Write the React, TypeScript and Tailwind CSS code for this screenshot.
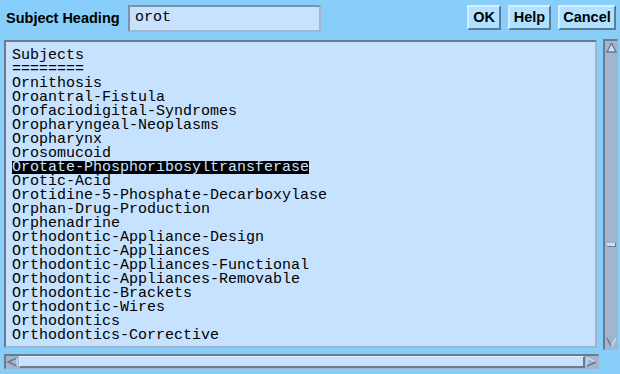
import React from 'react';

const subjects = [
  'Subjects',
  '========',
  'Ornithosis',
  'Oroantral-Fistula',
  'Orofaciodigital-Syndromes',
  'Oropharyngeal-Neoplasms',
  'Oropharynx',
  'Orosomucoid',
  'Orotate-Phosphoribosyltransferase',
  'Orotic-Acid',
  'Orotidine-5-Phosphate-Decarboxylase',
  'Orphan-Drug-Production',
  'Orphenadrine',
  'Orthodontic-Appliance-Design',
  'Orthodontic-Appliances',
  'Orthodontic-Appliances-Functional',
  'Orthodontic-Appliances-Removable',
  'Orthodontic-Brackets',
  'Orthodontic-Wires',
  'Orthodontics',
  'Orthodontics-Corrective',
];

const selected = 'Orotate-Phosphoribosyltransferase';

const mono = "font-['Liberation_Mono',monospace]";
const sans = "font-['Liberation_Sans',Arial,sans-serif]";

// raised Tk-style button
const TkButton: React.FC<{ label: string; width: string }> = ({ label, width }) => (
  <div
    className={`${width} h-[25px] flex items-center justify-center bg-[#b0e2ff] border-2 border-t-[#d4efff] border-l-[#d4efff] border-b-[#5b7c98] border-r-[#5b7c98] ${sans} font-bold text-[14.5px] text-black`}
  >
    {label}
  </div>
);

const ArrowUp = () => (
  <svg width="11" height="11" viewBox="0 0 11 11">
    <polygon points="5.5,1 10,10 1,10" fill="#c6e2ff" />
    <polyline points="5.5,1 10,10 1,10 5.5,1" stroke="#6c7b8b" strokeWidth="1.5" fill="none" />
  </svg>
);

const ArrowDown = () => (
  <svg width="11" height="11" viewBox="0 0 11 11">
    <polygon points="1,1 10,1 5.5,10" fill="#a2b5cd" />
    <polyline points="1,1 5.5,10" stroke="#6c7b8b" strokeWidth="1.5" fill="none" />
    <polyline points="5.5,10 10,1" stroke="#c6e2ff" strokeWidth="1.2" fill="none" />
  </svg>
);

const ArrowLeft = () => (
  <svg width="11" height="10" viewBox="0 0 11 10">
    <polygon points="1,5 10,1 10,9" fill="#a2b5cd" />
    <polyline points="10,1 1,5 10,9" stroke="#6c7b8b" strokeWidth="1.5" fill="none" />
    <polyline points="10,1 10,9" stroke="#c6e2ff" strokeWidth="1.2" fill="none" />
  </svg>
);

const ArrowRight = () => (
  <svg width="11" height="10" viewBox="0 0 11 10">
    <polygon points="1,1 10,5 1,9" fill="#a2b5cd" />
    <polyline points="1,9 1,1 10,5" stroke="#c6e2ff" strokeWidth="1.2" fill="none" />
    <polyline points="10,5 1,9" stroke="#6c7b8b" strokeWidth="1.5" fill="none" />
  </svg>
);

export default function App() {
  return (
    <div className="w-[620px] h-[374px] bg-[#87cefa] flex flex-col overflow-hidden">
      {/* Header row */}
      <div className="h-[39px] flex items-start pt-[5px]">
        <div className={`w-[128px] h-[27px] pl-[6px] flex items-center ${sans} font-bold text-[14.5px] text-black`}>
          Subject Heading
        </div>
        <div
          className={`w-[193px] h-[27px] bg-[#c6e2ff] border-2 border-t-[#7f93a8] border-l-[#7f93a8] border-b-[#9fb6cd] border-r-[#9fb6cd] pl-[5px] flex items-center ${mono} text-[15px] text-black`}
        >
          orot
        </div>
        <div className="ml-auto mr-[4px] flex gap-[7px]">
          <TkButton label="OK" width="w-[34px]" />
          <TkButton label="Help" width="w-[43px]" />
          <TkButton label="Cancel" width="w-[58px]" />
        </div>
      </div>

      {/* List + vertical scrollbar */}
      <div className="flex h-[311px] pl-[4px]">
        <div className="mt-[1px] w-[593px] h-[308px] bg-[#c6e2ff] border-2 border-t-[#6c7b8b] border-l-[#6c7b8b] border-b-[#9fb6cd] border-r-[#9fb6cd] pl-[6px] pt-[7px] overflow-hidden">
          {subjects.map((s) => (
            <div key={s} className={`h-[14px] leading-[14px] ${mono} text-[15px] text-black whitespace-pre`}>
              {s === selected ? (
                <span className="inline-block align-top h-[13px] leading-[14px] bg-black text-[#c6e2ff]">{s}</span>
              ) : (
                s
              )}
            </div>
          ))}
        </div>
        <div className="ml-[6px] w-[15px] h-[311px] bg-[#a2b5cd] border-t-2 border-l-2 border-[#6c7b8b] border-r border-b border-r-[#9fb6cd] border-b-[#9fb6cd] flex flex-col items-center">
          <div className="h-[12px] flex items-center justify-center">
            <ArrowUp />
          </div>
          <div className="mt-[190px] w-[9px] h-[4px] bg-[#c6e2ff] border-b border-r border-[#6c7b8b]" />
          <div className="flex-1" />
          <div className="h-[12px] mb-[1px] flex items-center justify-center">
            <ArrowDown />
          </div>
        </div>
      </div>

      {/* Horizontal scrollbar */}
      <div className="ml-[4px] mt-[4px] w-[595px] h-[15px] bg-[#a2b5cd] border-t-2 border-l-2 border-[#6c7b8b] border-r border-b border-r-[#9fb6cd] border-b-[#9fb6cd] flex">
        <div className="w-[13px] flex items-center justify-center">
          <ArrowLeft />
        </div>
        <div className="flex-1 bg-[#c6e2ff] border-t border-l border-[#dbeeff] border-b-2 border-r-2 border-b-[#6c7b8b] border-r-[#6c7b8b]" />
        <div className="w-[13px] flex items-center justify-center">
          <ArrowRight />
        </div>
      </div>
    </div>
  );
}
